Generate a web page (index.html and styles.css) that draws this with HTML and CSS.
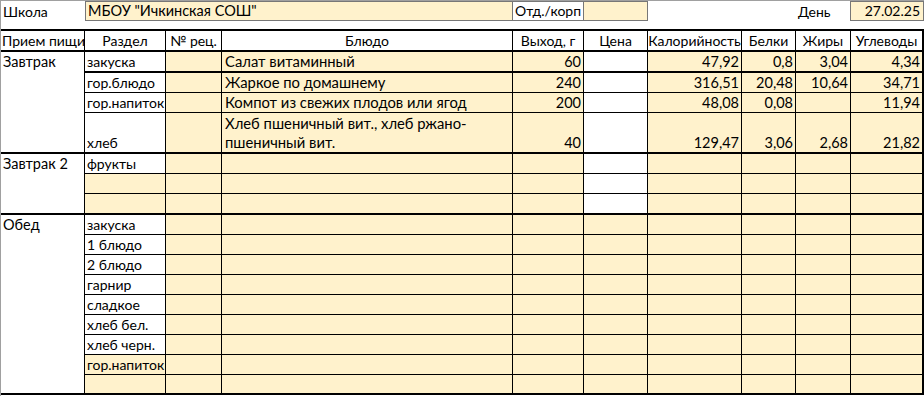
FILE: index.html
```html
<!DOCTYPE html>
<html lang="ru">
<head>
<meta charset="utf-8">
<title>Меню</title>
<link rel="stylesheet" href="styles.css">
</head>
<body>
<div class="sheet">
  <div class="top">
    <div class="tc label">Школа</div>
    <div class="tc box school">МБОУ "Ичкинская СОШ"</div>
    <div class="tc box white nl">Отд./корп</div>
    <div class="tc box nl"></div>
    <div class="tc blank2"></div>
    <div class="tc label day">День</div>
    <div class="tc box date">27.02.25</div>
  </div>

  <div class="table">
    <div class="c h c1 tb">Прием пищи</div>
    <div class="c h tb">Раздел</div>
    <div class="c h tb">№ рец.</div>
    <div class="c h tb">Блюдо</div>
    <div class="c h tb">Выход, г</div>
    <div class="c h tb">Цена</div>
    <div class="c h tb">Калорийность</div>
    <div class="c h tb">Белки</div>
    <div class="c h tb">Жиры</div>
    <div class="c h last tb">Углеводы</div>

    <!-- Завтрак -->
    <div class="c meal c1 tb span4">Завтрак</div>
    <div class="c sec tb">закуска</div>
    <div class="c o tb"></div>
    <div class="c o dish tb">Салат витаминный</div>
    <div class="c o n tb">60</div>
    <div class="c tb"></div>
    <div class="c o n tb">47,92</div>
    <div class="c o n tb">0,8</div>
    <div class="c o n tb">3,04</div>
    <div class="c o n last tb">4,34</div>

    <div class="c sec">гор.блюдо</div>
    <div class="c o"></div>
    <div class="c o dish">Жаркое по домашнему</div>
    <div class="c o n">240</div>
    <div class="c"></div>
    <div class="c o n">316,51</div>
    <div class="c o n">20,48</div>
    <div class="c o n">10,64</div>
    <div class="c o n last">34,71</div>

    <div class="c sec">гор.напиток</div>
    <div class="c o"></div>
    <div class="c o dish">Компот из свежих плодов или ягод</div>
    <div class="c o n">200</div>
    <div class="c"></div>
    <div class="c o n">48,08</div>
    <div class="c o n">0,08</div>
    <div class="c o n"></div>
    <div class="c o n last">11,94</div>

    <div class="c sec tb">хлеб</div>
    <div class="c o tb"></div>
    <div class="c o dish tb wrap">Хлеб пшеничный вит., хлеб ржано-пшеничный вит.</div>
    <div class="c o n tb">40</div>
    <div class="c tb"></div>
    <div class="c o n tb">129,47</div>
    <div class="c o n tb">3,06</div>
    <div class="c o n tb">2,68</div>
    <div class="c o n last tb">21,82</div>

    <!-- Завтрак 2 -->
    <div class="c meal c1 tb span3">Завтрак 2</div>
    <div class="c sec">фрукты</div>
    <div class="c o"></div>
    <div class="c o"></div>
    <div class="c o"></div>
    <div class="c"></div>
    <div class="c o"></div>
    <div class="c o"></div>
    <div class="c o"></div>
    <div class="c o last"></div>

    <div class="c o"></div>
    <div class="c o"></div>
    <div class="c o"></div>
    <div class="c o"></div>
    <div class="c"></div>
    <div class="c o"></div>
    <div class="c o"></div>
    <div class="c o"></div>
    <div class="c o last"></div>

    <div class="c o tb"></div>
    <div class="c o tb"></div>
    <div class="c o tb"></div>
    <div class="c o tb"></div>
    <div class="c tb"></div>
    <div class="c o tb"></div>
    <div class="c o tb"></div>
    <div class="c o tb"></div>
    <div class="c o last tb"></div>

    <!-- Обед -->
    <div class="c meal c1 tb span9">Обед</div>
    <div class="c sec">закуска</div>
    <div class="c o"></div><div class="c o"></div><div class="c o"></div><div class="c o"></div><div class="c o"></div><div class="c o"></div><div class="c o"></div><div class="c o last"></div>
    <div class="c sec">1 блюдо</div>
    <div class="c o"></div><div class="c o"></div><div class="c o"></div><div class="c o"></div><div class="c o"></div><div class="c o"></div><div class="c o"></div><div class="c o last"></div>
    <div class="c sec">2 блюдо</div>
    <div class="c o"></div><div class="c o"></div><div class="c o"></div><div class="c o"></div><div class="c o"></div><div class="c o"></div><div class="c o"></div><div class="c o last"></div>
    <div class="c sec">гарнир</div>
    <div class="c o"></div><div class="c o"></div><div class="c o"></div><div class="c o"></div><div class="c o"></div><div class="c o"></div><div class="c o"></div><div class="c o last"></div>
    <div class="c sec">сладкое</div>
    <div class="c o"></div><div class="c o"></div><div class="c o"></div><div class="c o"></div><div class="c o"></div><div class="c o"></div><div class="c o"></div><div class="c o last"></div>
    <div class="c sec">хлеб бел.</div>
    <div class="c o"></div><div class="c o"></div><div class="c o"></div><div class="c o"></div><div class="c o"></div><div class="c o"></div><div class="c o"></div><div class="c o last"></div>
    <div class="c sec">хлеб черн.</div>
    <div class="c o"></div><div class="c o"></div><div class="c o"></div><div class="c o"></div><div class="c o"></div><div class="c o"></div><div class="c o"></div><div class="c o last"></div>
    <div class="c sec o">гор.напиток</div>
    <div class="c o"></div><div class="c o"></div><div class="c o"></div><div class="c o"></div><div class="c o"></div><div class="c o"></div><div class="c o"></div><div class="c o last"></div>
    <div class="c o tb"></div>
    <div class="c o tb"></div><div class="c o tb"></div><div class="c o tb"></div><div class="c o tb"></div><div class="c o tb"></div><div class="c o tb"></div><div class="c o tb"></div><div class="c o last tb"></div>
  </div>
</div>
</body>
</html>
```
FILE: styles.css
```css
html, body {
  margin: 0;
  padding: 0;
  background: #ffffff;
}

.sheet {
  width: 923px;
  height: 395px;
  border-top: 1px solid #a0a0a0;
  border-left: 1px solid #a0a0a0;
  font-family: Lato, "Liberation Sans", sans-serif;
  font-size: 14px;
  color: #000;
  overflow: hidden;
}

.top {
  display: grid;
  grid-template-columns: 84px 81px 56px 291px 71px 64px 94px 54px 55px 73px;
  height: 20px;
  margin-bottom: 8px;
}

.tc {
  box-sizing: border-box;
  height: 20px;
  line-height: 18px;
  white-space: nowrap;
  padding: 0 2px;
  display: flex;
  align-items: flex-end;
}

.school {
  font-size: 14.5px;
}

.label {
  padding-left: 2px;
}

.box {
  background: #fff2cc;
  border: 1px solid #777;
}

.box.white {
  background: #ffffff;
}

.nl {
  border-left: none;
}

.school {
  grid-column: 2 / span 3;
}

.blank2 {
  grid-column: span 2;
}

.day {
  padding-left: 2px;
}

.date {
  margin-left: -1px;
  justify-content: flex-end;
  padding-right: 3px;
}

.table {
  display: grid;
  grid-template-columns: 84px 81px 56px 291px 71px 64px 94px 54px 55px 73px;
  grid-template-rows: 21px 21px 20px 20px 41px 20px 20px 21px repeat(9, 20px);
  border-top: 2px solid #000;
}

.c {
  box-sizing: border-box;
  border-right: 1px solid #000;
  border-bottom: 1px solid #000;
  background: #ffffff;
  padding: 0 2px 0 3px;
  line-height: 19px;
  white-space: nowrap;
  overflow: hidden;
  display: flex;
  align-items: flex-end;
}

.c.dish {
  font-size: 14.8px;
  padding-left: 3px;
}

.c.sec {
  padding-left: 2px;
  padding-right: 0;
}

.c.tb {
  border-bottom-width: 2px;
}

.c.last {
  border-right-width: 2px;
}

.c.o {
  background: #fff2cc;
}

.c.n {
  justify-content: flex-end;
  padding-right: 2px;
  font-size: 14.5px;
}

.c.h {
  justify-content: center;
  padding: 0;
}

.c.c1 {
  padding-left: 2px;
}

.c.meal {
  align-items: flex-start;
  padding-top: 0;
  font-size: 14.5px;
}

.span4 { grid-row: span 4; }
.span3 { grid-row: span 3; }
.span9 { grid-row: span 9; }

.c.wrap {
  white-space: normal;
  line-height: 19px;
}
```
